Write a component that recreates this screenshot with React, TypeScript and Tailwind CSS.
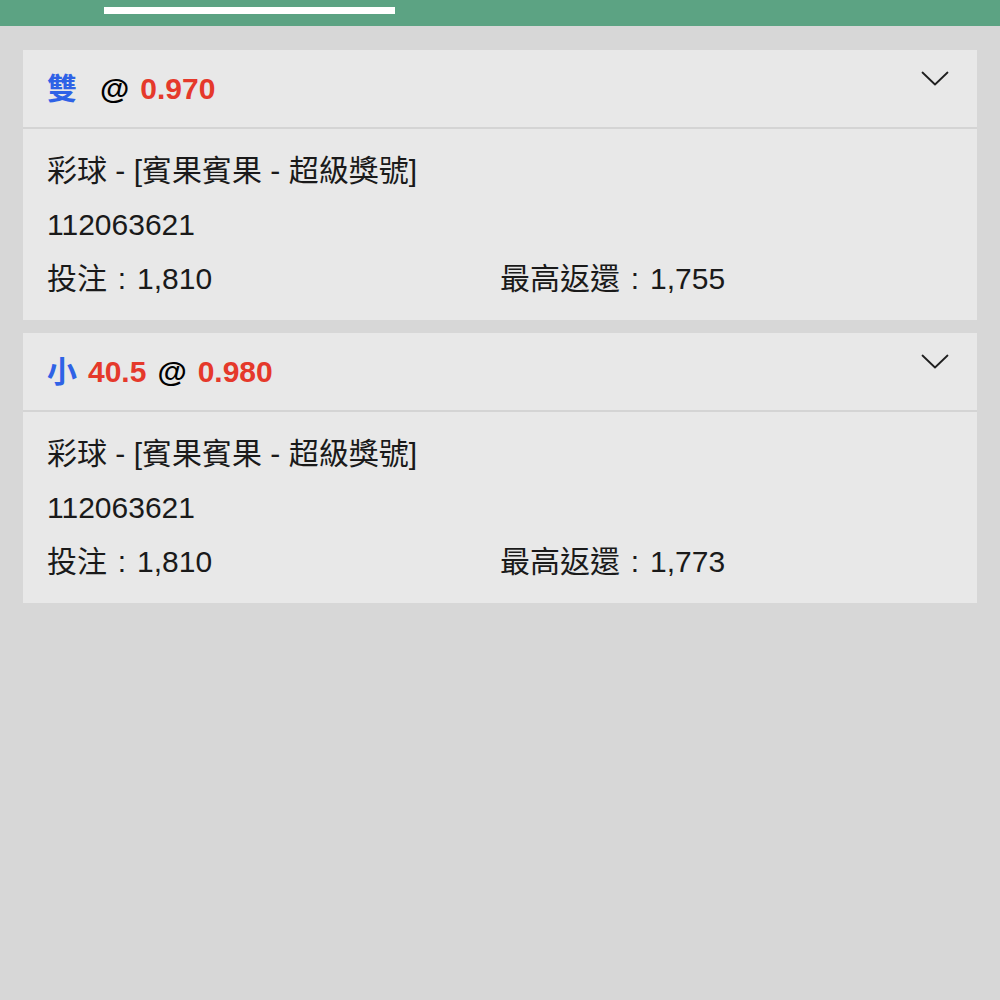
type Bet = {
  pick: string;
  line?: string;
  odds: string;
  game: string;
  round: string;
  stake: string;
  payout: string;
};

const bets: Bet[] = [
  {
    pick: "雙",
    odds: "0.970",
    game: "彩球 - [賓果賓果 - 超級獎號]",
    round: "112063621",
    stake: "1,810",
    payout: "1,755",
  },
  {
    pick: "小",
    line: "40.5",
    odds: "0.980",
    game: "彩球 - [賓果賓果 - 超級獎號]",
    round: "112063621",
    stake: "1,810",
    payout: "1,773",
  },
];

function Chevron() {
  return (
    <svg width="30" height="18" viewBox="0 0 30 18" fill="none" className="mt-[20px] shrink-0">
      <polyline points="2.5,2.5 15,14.5 27.5,2.5" stroke="#1f1f1f" strokeWidth="1.8" strokeLinecap="round" strokeLinejoin="round" />
    </svg>
  );
}

// full-width colon, centred in its cell
const Colon = () => <span className="inline-block w-[30px] text-center">:</span>;

function BetCard({ bet }: { bet: Bet }) {
  return (
    <div className="bg-[#e8e8e8]">
      <div className="flex h-[79px] justify-between border-b-2 border-[#d4d4d4] pl-6 pr-[27px]">
        <div className="flex items-center text-[30px] font-bold">
          <span className="text-[#2f62e6]">{bet.pick}</span>
          {bet.line ? <span className="ml-[11px] text-[#e5392b]">{bet.line}</span> : null}
          <span className={bet.line ? "ml-[11px] text-black" : "ml-[23px] text-black"}>@</span>
          <span className="ml-[11px] text-[#e5392b]">{bet.odds}</span>
        </div>
        <Chevron />
      </div>
      <div className="flex h-[191px] flex-col gap-[18px] pl-6 pt-6 text-[30px] leading-[36px] text-[#1a1a1a]">
        <div>{bet.game}</div>
        <div>{bet.round}</div>
        <div className="flex">
          <span className="w-[453px]">
            投注<Colon />{bet.stake}
          </span>
          <span>
            最高返還<Colon />{bet.payout}
          </span>
        </div>
      </div>
    </div>
  );
}

export default function App() {
  return (
    <div
      className="min-h-[1000px] bg-[#d7d7d7]"
      style={{ fontFamily: '"Liberation Sans", "Noto Sans CJK TC", sans-serif' }}
    >
      <div className="h-[26px] bg-[#5ca383] pl-[104px] pt-[7px]">
        <div className="h-[7px] w-[291px] bg-white" />
      </div>
      <div className="flex flex-col gap-[13px] px-[23px] pt-6">
        {bets.map((b, i) => (
          <BetCard key={i} bet={b} />
        ))}
      </div>
    </div>
  );
}
